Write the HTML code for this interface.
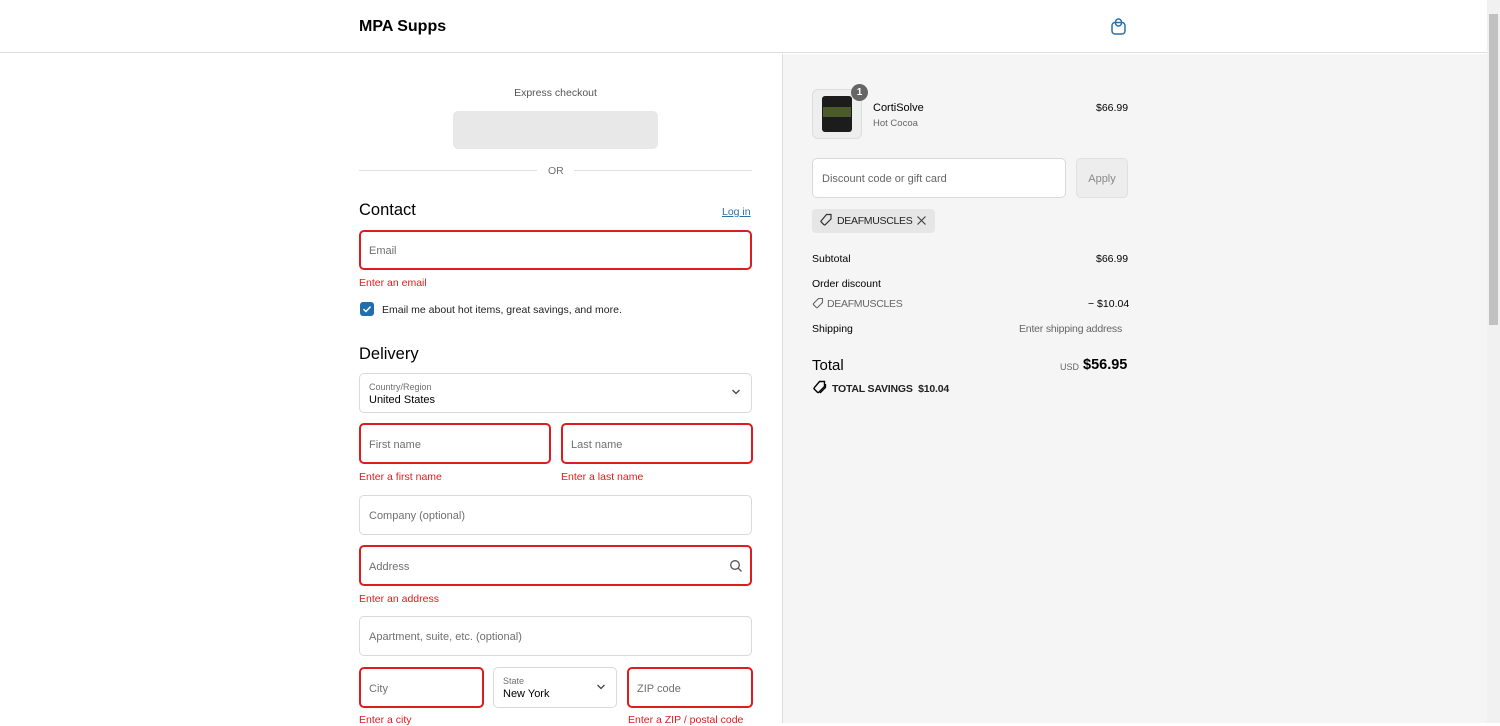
<!DOCTYPE html>
<html><head><meta charset="utf-8"><style>
*{box-sizing:border-box;margin:0;padding:0}
body{width:1500px;height:723px;overflow:hidden;background:#fff;font-family:"Liberation Sans",sans-serif;color:#000;position:relative;font-size:12px}
.a{position:absolute}
.hdr{left:0;top:0;width:1487px;height:53px;border-bottom:1px solid #dedede;background:#fff}
.right{left:782px;top:54px;width:705px;height:669px;background:#f5f5f5;border-left:1px solid #dedede}
.in{position:absolute;border:1px solid #d9d9d9;border-radius:5px;background:#fff;color:#707070;font-size:11px;padding-left:9px;display:flex;align-items:center;padding-top:2px}
.err{border:2px solid #dd1d1d;padding-left:8px}
.et{position:absolute;color:#dd1d1d;font-size:10.5px}
.sb{left:1487px;top:0;width:13px;height:723px;background:#f1f1f1}
.th{left:1489px;top:14px;width:9px;height:311px;background:#c1c1c1}
.h2{font-size:16.5px;color:#000}
</style></head><body>
<div class="a hdr"></div>
<div class="a" style="left:359px;top:18px;font-size:16px;font-weight:bold;">MPA Supps</div>
<svg class="a" style="left:1110px;top:17px" width="18" height="19" viewBox="0 0 18 19"><rect x="2" y="5.5" width="13" height="11.5" rx="3" fill="none" stroke="#2d6fa8" stroke-width="1.5"/><rect x="5.5" y="2" width="6" height="7" rx="3" fill="none" stroke="#2d6fa8" stroke-width="1.5"/></svg>
<div class="a right"></div>
<div class="a sb"></div><div class="a th"></div>

<div class="a" style="left:359px;top:87px;width:393px;text-align:center;color:#555;font-size:10.5px">Express checkout</div>
<div class="a" style="left:453px;top:111px;width:205px;height:38px;background:#e8e8e8;border-radius:5px"></div>
<div class="a" style="left:359px;top:170px;width:178px;height:1px;background:#dedede"></div>
<div class="a" style="left:574px;top:170px;width:178px;height:1px;background:#dedede"></div>
<div class="a" style="left:548px;top:165px;color:#707070;font-size:10.5px">OR</div>

<div class="a h2" style="left:359px;top:201px">Contact</div>
<div class="a" style="left:722px;top:206px;color:#2d6fa8;font-size:10.5px;text-decoration:underline">Log in</div>
<div class="in err" style="left:359px;top:230px;width:393px;height:40px">Email</div>
<div class="et" style="left:359px;top:277px">Enter an email</div>
<div class="a" style="left:360px;top:302px;width:14px;height:14px;background:#1f6fb0;border-radius:3px"></div>
<svg class="a" style="left:360px;top:302px" width="14" height="14"><path d="M3.5 7.2l2.4 2.3 4.6-4.8" fill="none" stroke="#fff" stroke-width="1.5"/></svg>
<div class="a" style="left:382px;top:304px;font-size:10.5px;color:#222">Email me about hot items, great savings, and more.</div>

<div class="a h2" style="left:359px;top:345px">Delivery</div>
<div class="in" style="left:359px;top:373px;width:393px;height:40px;display:block;padding-top:8px"><div style="font-size:9px;color:#707070">Country/Region</div><div style="color:#000;font-size:11px;margin-top:2px">United States</div></div>
<svg class="a" style="left:731px;top:388px" width="10" height="8"><path d="M1.5 2l3.5 3.5L8.5 2" fill="none" stroke="#444" stroke-width="1.3"/></svg>
<div class="in err" style="left:359px;top:423px;width:192px;height:41px">First name</div>
<div class="in err" style="left:561px;top:423px;width:192px;height:41px">Last name</div>
<div class="et" style="left:359px;top:471px">Enter a first name</div>
<div class="et" style="left:561px;top:471px">Enter a last name</div>
<div class="in" style="left:359px;top:495px;width:393px;height:40px">Company (optional)</div>
<div class="in err" style="left:359px;top:545px;width:393px;height:41px">Address</div>
<svg class="a" style="left:729px;top:559px" width="14" height="14"><circle cx="6" cy="6" r="4.3" fill="none" stroke="#555" stroke-width="1.3"/><path d="M9.2 9.2l3.3 3.3" stroke="#555" stroke-width="1.3"/></svg>
<div class="et" style="left:359px;top:593px">Enter an address</div>
<div class="in" style="left:359px;top:616px;width:393px;height:40px">Apartment, suite, etc. (optional)</div>
<div class="in err" style="left:359px;top:667px;width:125px;height:41px">City</div>
<div class="in" style="left:493px;top:667px;width:124px;height:41px;display:block;padding-top:8px"><div style="font-size:9px;color:#707070">State</div><div style="color:#000;font-size:11px;margin-top:2px">New York</div></div>
<svg class="a" style="left:596px;top:683px" width="10" height="8"><path d="M1.5 2l3.5 3.5L8.5 2" fill="none" stroke="#444" stroke-width="1.3"/></svg>
<div class="in err" style="left:627px;top:667px;width:126px;height:41px">ZIP code</div>
<div class="et" style="left:359px;top:714px">Enter a city</div>
<div class="et" style="left:628px;top:714px">Enter a ZIP / postal code</div>

<div class="a" style="left:812px;top:89px;width:50px;height:50px;border:1px solid #ddd;border-radius:6px;background:#eee"></div>
<div class="a" style="left:822px;top:96px;width:30px;height:36px;background:#1c1c1c;border-radius:3px"></div>
<div class="a" style="left:823px;top:107px;width:28px;height:10px;background:#4a5a2a"></div>
<div class="a" style="left:851px;top:84px;width:17px;height:17px;border-radius:50%;background:#666;color:#fff;font-size:10px;font-weight:bold;text-align:center;line-height:17px">1</div>
<div class="a" style="left:873px;top:102px;font-size:11px">CortiSolve</div>
<div class="a" style="left:873px;top:118px;font-size:9.5px;color:#666">Hot Cocoa</div>
<div class="a" style="left:1096px;top:102px;font-size:10.5px">$66.99</div>
<div class="in" style="left:812px;top:158px;width:254px;height:40px;color:#666">Discount code or gift card</div>
<div class="a" style="left:1076px;top:158px;width:52px;height:40px;border:1px solid #e0e0e0;border-radius:5px;background:#ededed;color:#888;font-size:11px;text-align:center;line-height:40px">Apply</div>
<div class="a" style="left:812px;top:209px;width:123px;height:24px;background:#e6e6e6;border-radius:4px"></div>
<svg class="a" style="left:819px;top:213px" width="14" height="14"><path d="M7.5 1.5h4.5v4.5L6.3 11.7a1 1 0 01-1.4 0L2.3 9.1a1 1 0 010-1.4z" fill="none" stroke="#333" stroke-width="1.2"/></svg>
<div class="a" style="left:837px;top:215px;font-size:10.5px;color:#222;letter-spacing:-0.3px">DEAFMUSCLES</div>
<svg class="a" style="left:916px;top:215px" width="11" height="11"><path d="M1.5 1.5l8 8M9.5 1.5l-8 8" stroke="#444" stroke-width="1.2"/></svg>
<div class="a" style="left:812px;top:253px;font-size:10.5px">Subtotal</div>
<div class="a" style="left:1096px;top:253px;font-size:10.5px">$66.99</div>
<div class="a" style="left:812px;top:278px;font-size:10.5px">Order discount</div>
<svg class="a" style="left:812px;top:297px" width="12" height="12"><path d="M6.5 1.5h4v4L5.5 10.5a.9.9 0 01-1.2 0L1.5 7.7a.9.9 0 010-1.2z" fill="none" stroke="#666" stroke-width="1.1"/></svg>
<div class="a" style="left:827px;top:298px;font-size:10.5px;color:#666;letter-spacing:-0.3px">DEAFMUSCLES</div>
<div class="a" style="left:1088px;top:298px;font-size:10.5px">− $10.04</div>
<div class="a" style="left:812px;top:323px;font-size:10.5px">Shipping</div>
<div class="a" style="left:1019px;top:323px;font-size:10.5px;color:#666;letter-spacing:-0.2px">Enter shipping address</div>
<div class="a" style="left:812px;top:357px;font-size:15px">Total</div>
<div class="a" style="left:1060px;top:362px;font-size:9px;color:#666">USD</div>
<div class="a" style="left:1083px;top:357px;font-size:14.5px;font-weight:bold">$56.95</div>
<svg class="a" style="left:812px;top:380px" width="15" height="15"><path d="M7.5 1.5h5v5L6.8 12.2a1 1 0 01-1.4 0L2.3 9.1a1 1 0 010-1.4z" fill="none" stroke="#000" stroke-width="1.4"/><path d="M13.5 4v3.5l-5.5 5.5" fill="none" stroke="#000" stroke-width="1.3"/></svg>
<div class="a" style="left:832px;top:383px;font-size:10.5px;font-weight:bold;color:#222;letter-spacing:-0.2px">TOTAL SAVINGS&nbsp; $10.04</div>
</body></html>
